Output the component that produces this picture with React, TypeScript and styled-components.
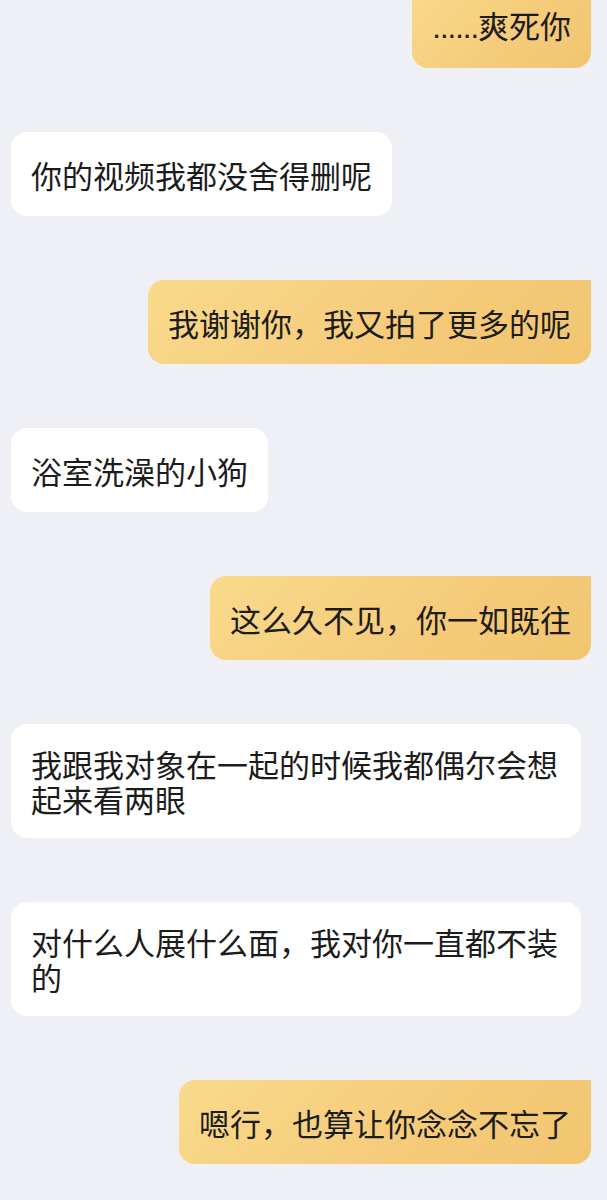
import React from 'react';
import styled, { createGlobalStyle } from 'styled-components';

const GlobalStyle = createGlobalStyle`
  html, body {
    margin: 0;
    padding: 0;
    background: #eef0f5;
  }
  body {
    font-family: "Noto Sans CJK SC", "Noto Sans", sans-serif;
  }
`;

const Screen = styled.div`
  width: 607px;
  height: 1200px;
  overflow: hidden;
  background: #eef0f5;
`;

const Thread = styled.div`
  display: flex;
  flex-direction: column;
  gap: 64px;
  margin-top: -16px;
`;

const Row = styled.div<{ $mine?: boolean }>`
  display: flex;
  justify-content: ${(p) => (p.$mine ? 'flex-end' : 'flex-start')};
  padding: ${(p) => (p.$mine ? '0 16px 0 0' : '0 0 0 11px')};
`;

const Bubble = styled.div<{ $mine?: boolean }>`
  box-sizing: border-box;
  max-width: 570px;
  min-height: 84px;
  display: flex;
  align-items: center;
  padding: 22px 20px;
  font-size: 31px;
  line-height: 35px;
  color: #1c1c1c;
  border-radius: 16px;
  border-top-right-radius: ${(p) => (p.$mine ? '0' : '16px')};
  background: ${(p) =>
    p.$mine ? 'linear-gradient(135deg, #f9da8c 0%, #f5cc7b 55%, #f2c46f 100%)' : '#ffffff'};
`;

const Dots = styled.span`
  letter-spacing: -1px;
  font-family: "Liberation Sans", sans-serif;
`;

interface Message {
  text: string;
  mine?: boolean;
}

const messages: Message[] = [
  { text: '爽死你', mine: true },
  { text: '你的视频我都没舍得删呢' },
  { text: '我谢谢你，我又拍了更多的呢', mine: true },
  { text: '浴室洗澡的小狗' },
  { text: '这么久不见，你一如既往', mine: true },
  { text: '我跟我对象在一起的时候我都偶尔会想起来看两眼' },
  { text: '对什么人展什么面，我对你一直都不装的' },
  { text: '嗯行，也算让你念念不忘了', mine: true },
];

const App: React.FC = () => {
  return (
    <Screen>
      <GlobalStyle />
      <Thread>
        {messages.map((m, i) => (
          <Row key={i} $mine={m.mine}>
            <Bubble $mine={m.mine}>
              <span>
                {i === 0 && <Dots>......</Dots>}
                {m.text}
              </span>
            </Bubble>
          </Row>
        ))}
      </Thread>
    </Screen>
  );
};

export default App;
